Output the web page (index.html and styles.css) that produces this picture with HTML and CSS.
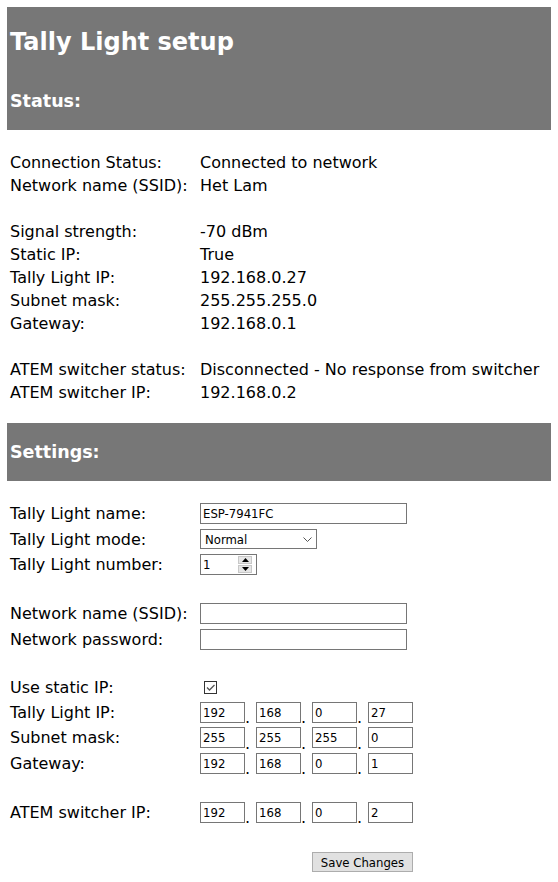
FILE: index.html
```html
<!DOCTYPE html>
<html>
<head>
<meta charset="utf-8">
<title>Tally Light setup</title>
<link rel="stylesheet" href="styles.css">
</head>
<body>
<div class="band">
  <h1 class="title">Tally Light setup</h1>
  <h2 class="section">Status:</h2>
</div>
<div class="status">
  <div class="lbl">Connection Status:</div><div class="val">Connected to network</div>
  <div class="lbl">Network name (SSID):</div><div class="val">Het Lam</div>
  <div class="blank"></div>
  <div class="lbl">Signal strength:</div><div class="val">-70 dBm</div>
  <div class="lbl">Static IP:</div><div class="val">True</div>
  <div class="lbl">Tally Light IP:</div><div class="val">192.168.0.27</div>
  <div class="lbl">Subnet mask:</div><div class="val">255.255.255.0</div>
  <div class="lbl">Gateway:</div><div class="val">192.168.0.1</div>
  <div class="blank"></div>
  <div class="lbl">ATEM switcher status:</div><div class="val">Disconnected - No response from switcher</div>
  <div class="lbl">ATEM switcher IP:</div><div class="val">192.168.0.2</div>
</div>
<div class="band">
  <h2 class="section">Settings:</h2>
</div>
<form class="settings">
  <div class="lbl r">Tally Light name:</div>
  <div class="val r"><input class="txt" type="text" value="ESP-7941FC"></div>

  <div class="lbl r">Tally Light mode:</div>
  <div class="val r">
    <div class="sel"><span class="sel-text">Normal</span>
      <svg class="chev" width="9" height="5" viewBox="0 0 9 5"><path d="M0.5 0.5 L4.5 4.5 L8.5 0.5" fill="none" stroke="#555" stroke-width="1"/></svg>
    </div>
  </div>

  <div class="lbl r">Tally Light number:</div>
  <div class="val r">
    <div class="num"><span class="num-text">1</span>
      <span class="spin">
        <span class="spin-btn"><svg width="7" height="4" viewBox="0 0 7 4"><path d="M3.5 0 L7 4 L0 4 Z" fill="#000"/></svg></span>
        <span class="spin-btn"><svg width="7" height="4" viewBox="0 0 7 4"><path d="M0 0 L7 0 L3.5 4 Z" fill="#000"/></svg></span>
      </span>
    </div>
  </div>

  <div class="blank"></div>

  <div class="lbl r">Network name (SSID):</div>
  <div class="val r"><input class="txt" type="text" value=""></div>

  <div class="lbl r">Network password:</div>
  <div class="val r"><input class="txt" type="password" value=""></div>

  <div class="blank"></div>

  <div class="lbl rc">Use static IP:</div>
  <div class="val rc">
    <span class="chk"><svg width="11" height="11" viewBox="0 0 11 11"><path d="M2 5.5 L4.5 8 L9.5 3" fill="none" stroke="#555" stroke-width="1.3"/></svg></span>
  </div>

  <div class="lbl r">Tally Light IP:</div>
  <div class="val r ip"><input class="oct" value="192"><span class="dot">.</span><input class="oct" value="168"><span class="dot">.</span><input class="oct" value="0"><span class="dot">.</span><input class="oct" value="27"></div>

  <div class="lbl r">Subnet mask:</div>
  <div class="val r ip"><input class="oct" value="255"><span class="dot">.</span><input class="oct" value="255"><span class="dot">.</span><input class="oct" value="255"><span class="dot">.</span><input class="oct" value="0"></div>

  <div class="lbl r">Gateway:</div>
  <div class="val r ip"><input class="oct" value="192"><span class="dot">.</span><input class="oct" value="168"><span class="dot">.</span><input class="oct" value="0"><span class="dot">.</span><input class="oct" value="1"></div>

  <div class="blank"></div>

  <div class="lbl r">ATEM switcher IP:</div>
  <div class="val r ip"><input class="oct" value="192"><span class="dot">.</span><input class="oct" value="168"><span class="dot">.</span><input class="oct" value="0"><span class="dot">.</span><input class="oct" value="2"></div>

  <div class="blank"></div>

  <div class="lbl rb"></div>
  <div class="val rb btn-cell"><button type="button" class="save">Save Changes</button></div>
</form>
</body>
</html>
```

FILE: styles.css
```css
html, body {
  background: #fff;
}
body {
  margin: 7px;
  font-family: "DejaVu Sans", Verdana, sans-serif;
  font-size: 16px;
  color: #000;
}
.band {
  background: #777777;
  color: #fff;
  padding: 0 3px;
}
.title {
  margin: 0;
  padding-top: 3px;
  height: 62px;
  font-size: 24px;
  line-height: 65px;
  font-weight: bold;
}
.section {
  margin: 0;
  height: 58px;
  font-size: 17.5px;
  line-height: 58px;
  font-weight: bold;
}
.status {
  display: grid;
  grid-template-columns: 190px auto;
  padding: 21px 3px 19px;
  line-height: 23px;
}
.blank {
  grid-column: 1 / span 2;
  height: 23.5px;
}
.status .blank {
  height: 23px;
}
.lbl, .val {
  white-space: nowrap;
}
.settings {
  display: grid;
  grid-template-columns: 190px 213px;
  padding: 20px 3px 0;
  margin: 0;
}
.r {
  height: 25.5px;
  display: flex;
  align-items: center;
}
.rc {
  height: 24px;
  display: flex;
  align-items: center;
}
.rb {
  height: 27px;
  display: flex;
  align-items: center;
}
.btn-cell {
  justify-content: flex-end;
}
input, .sel, .num, button {
  font-family: "DejaVu Sans Condensed", "DejaVu Sans", sans-serif;
  font-size: 13px;
  color: #000;
}
.txt {
  box-sizing: border-box;
  width: 207px;
  height: 21px;
  margin: 0;
  padding: 1px 2px;
  border: 1px solid #767676;
  border-radius: 0;
  background: #fff;
  outline: none;
}
.sel {
  box-sizing: border-box;
  width: 117px;
  height: 20px;
  border: 1px solid #767676;
  background: #fff;
  display: flex;
  align-items: center;
  padding: 0 4px 0 4px;
}
.sel-text {
  flex: 1;
}
.chev {
  display: block;
}
.num {
  box-sizing: border-box;
  width: 57px;
  height: 21px;
  border: 1px solid #767676;
  background: #fff;
  display: flex;
  align-items: center;
  padding: 0 4px 0 2px;
}
.num-text {
  flex: 1;
}
.spin {
  display: flex;
  flex-direction: column;
  width: 14px;
  height: 17px;
  gap: 1px;
}
.spin-btn {
  flex: 1;
  background: #e6e6e6;
  border: 1px solid #c8c8c8;
  display: flex;
  align-items: center;
  justify-content: center;
}
.spin-btn svg {
  display: block;
}
.chk {
  box-sizing: border-box;
  width: 13px;
  height: 13px;
  margin-left: 4px;
  border: 1px solid #333;
  background: #fff;
  display: flex;
  align-items: center;
  justify-content: center;
}
.chk svg {
  display: block;
}
.ip {
  align-items: center;
}
.oct {
  box-sizing: border-box;
  width: 45px;
  height: 21px;
  margin: 0;
  padding: 1px 2px;
  border: 1px solid #767676;
  border-radius: 0;
  background: #fff;
  outline: none;
}
.dot {
  width: 11px;
  align-self: flex-end;
  font-size: 16px;
  line-height: 16px;
  margin-bottom: -1px;
}
.save {
  box-sizing: border-box;
  width: 101px;
  height: 20px;
  margin: 0;
  padding: 0;
  background: #e1e1e1;
  border: 1px solid #adadad;
  border-radius: 0;
}
```
